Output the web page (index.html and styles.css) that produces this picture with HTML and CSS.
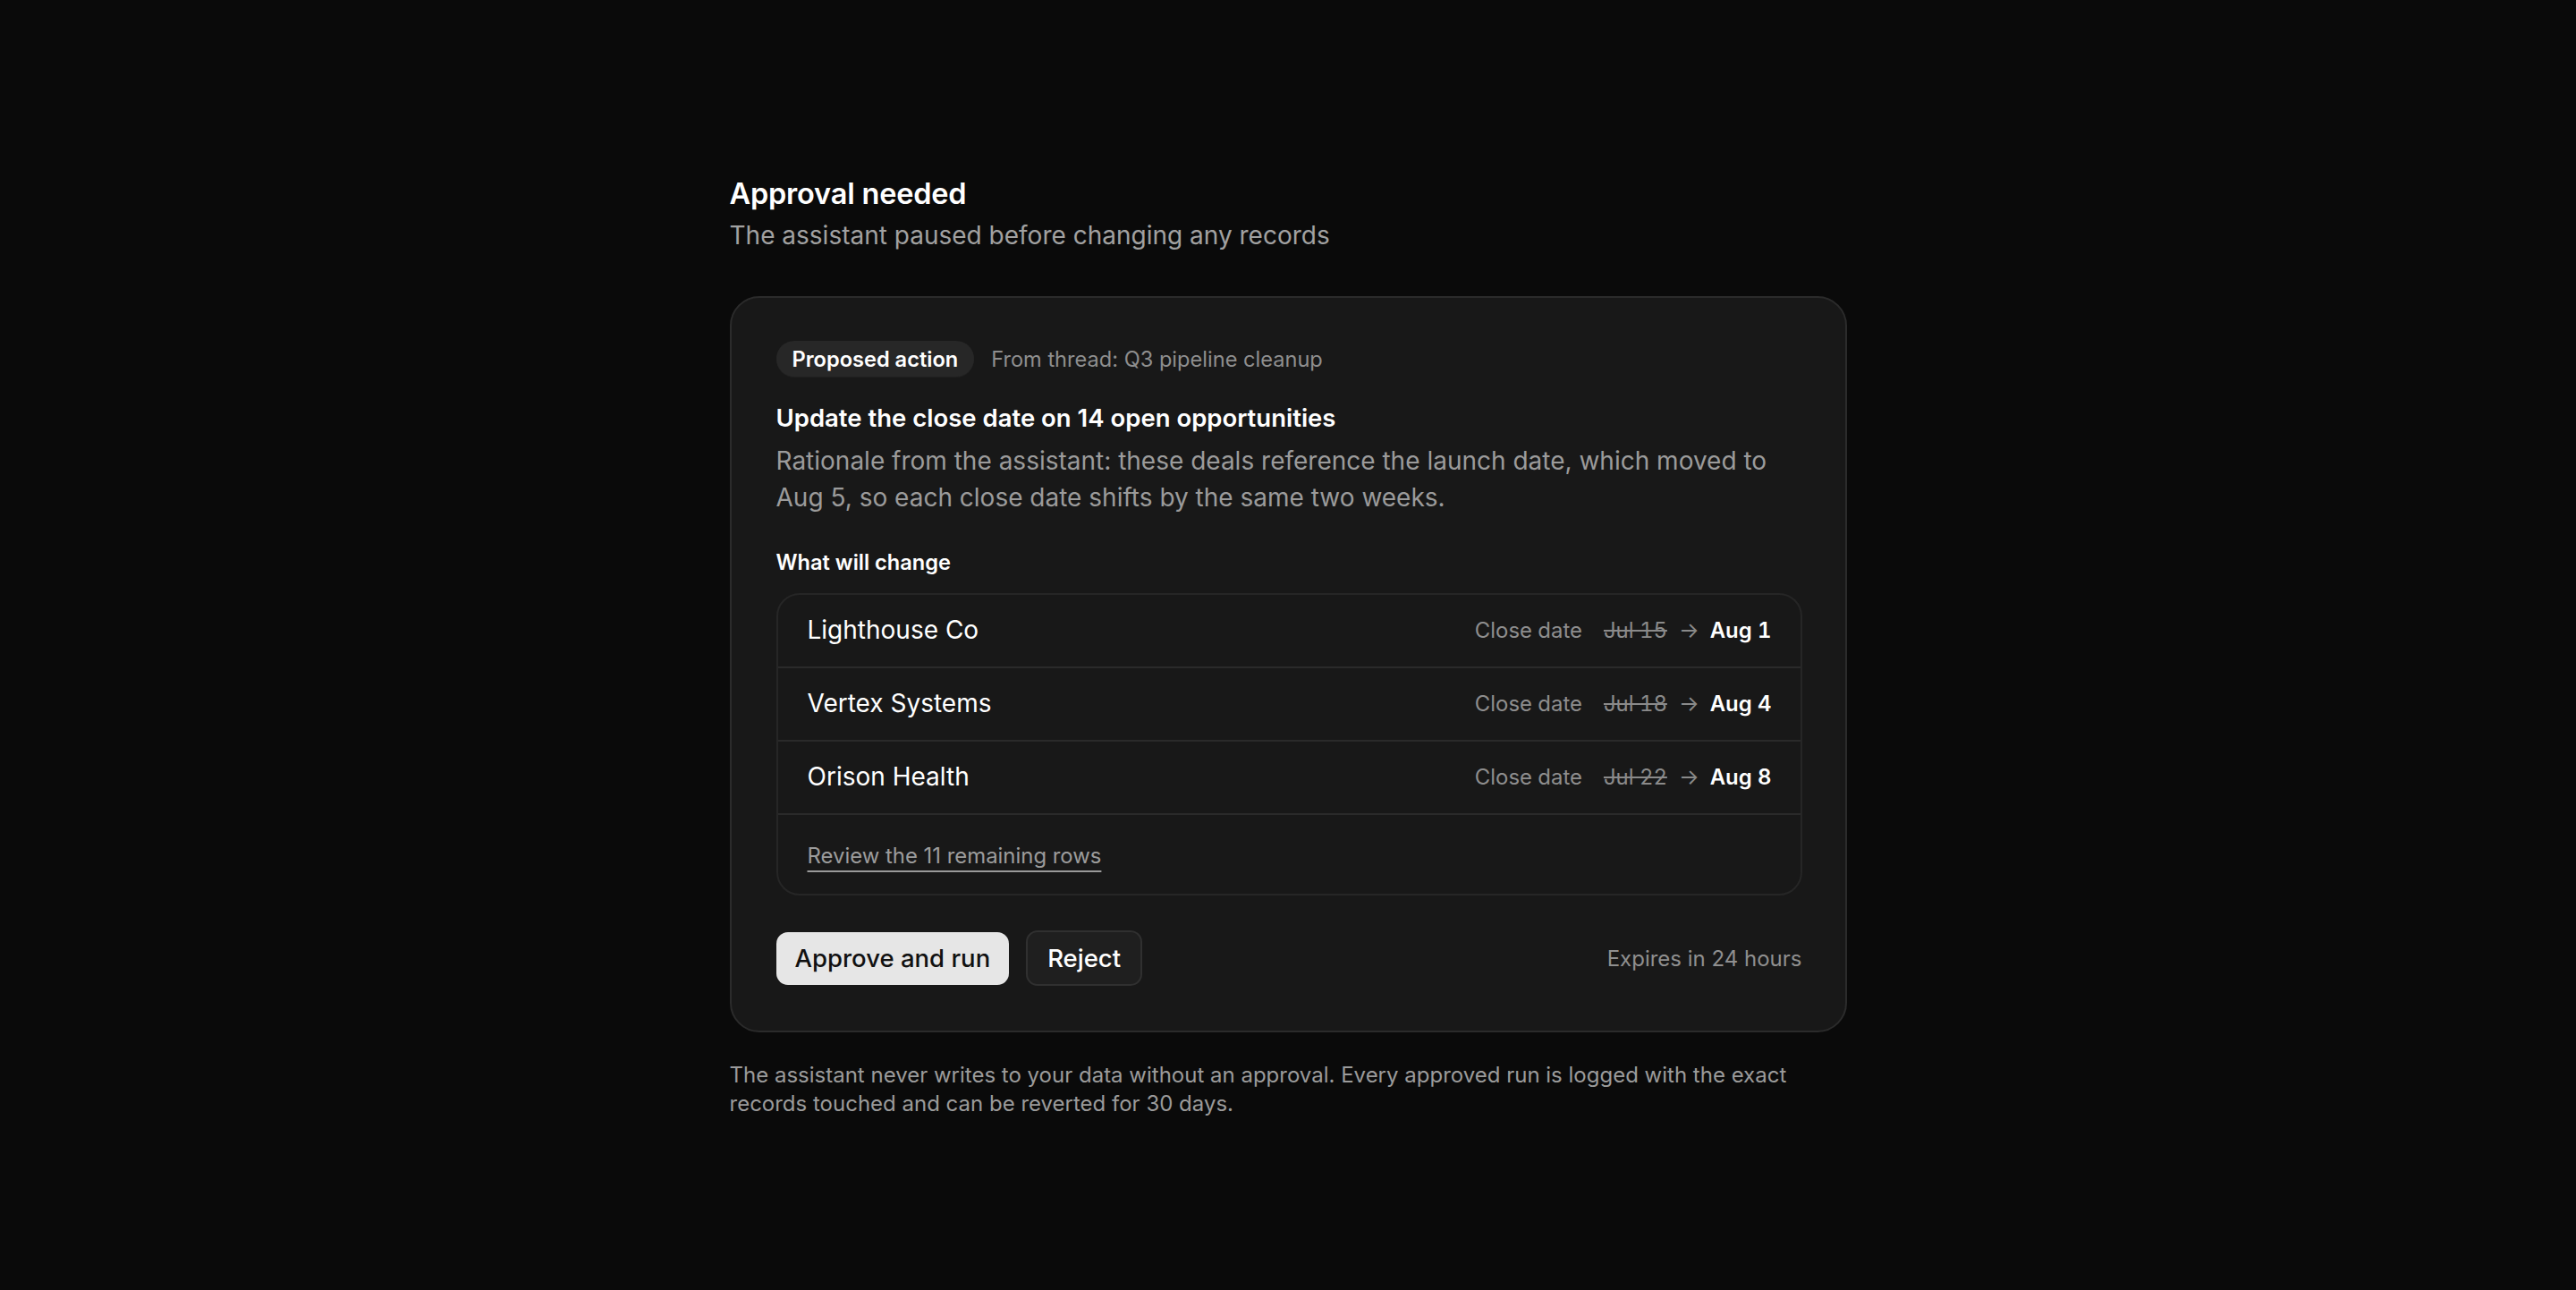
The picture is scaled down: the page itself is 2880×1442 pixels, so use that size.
FILE: index.html
```html
<!DOCTYPE html>
<html lang="en">
<head>
<meta charset="utf-8">
<title>Approval needed</title>
<link rel="stylesheet" href="styles.css">
</head>
<body>
<main class="page">
  <header class="intro">
    <h1 class="intro-title">Approval needed</h1>
    <p class="intro-sub">The assistant paused before changing any records</p>
  </header>

  <section class="card">
    <div class="meta">
      <span class="badge">Proposed action</span>
      <span class="thread">From thread: Q3 pipeline cleanup</span>
    </div>

    <h2 class="action-title">Update the close date on 14 open opportunities</h2>
    <p class="rationale">Rationale from the assistant: these deals reference the launch date, which moved to Aug 5, so each close date shifts by the same two weeks.</p>

    <h3 class="section-label">What will change</h3>
    <div class="changes">
      <div class="change-row">
        <span class="account">Lighthouse Co</span>
        <span class="diff">
          <span class="field">Close date</span>
          <span class="old">Jul 15</span>
          <span class="arrow">→</span>
          <span class="new">Aug 1</span>
        </span>
      </div>
      <div class="change-row">
        <span class="account">Vertex Systems</span>
        <span class="diff">
          <span class="field">Close date</span>
          <span class="old">Jul 18</span>
          <span class="arrow">→</span>
          <span class="new">Aug 4</span>
        </span>
      </div>
      <div class="change-row">
        <span class="account">Orison Health</span>
        <span class="diff">
          <span class="field">Close date</span>
          <span class="old">Jul 22</span>
          <span class="arrow">→</span>
          <span class="new">Aug 8</span>
        </span>
      </div>
      <div class="change-more">
        <a class="more-link" href="#">Review the 11 remaining rows</a>
      </div>
    </div>

    <div class="actions">
      <button class="btn btn-primary" type="button">Approve and run</button>
      <button class="btn btn-secondary" type="button">Reject</button>
      <span class="expires">Expires in 24 hours</span>
    </div>
  </section>

  <p class="footnote">The assistant never writes to your data without an approval. Every approved run is logged with the exact records touched and can be reverted for 30 days.</p>
</main>
</body>
</html>
```

FILE: styles.css
```css
* {
  box-sizing: border-box;
}

html, body {
  margin: 0;
  padding: 0;
  background: #0a0a0a;
}

body {
  font-family: Inter, "Noto Sans", "Liberation Sans", sans-serif;
  color: #f5f5f5;
  -webkit-font-smoothing: antialiased;
}

.page {
  width: 1249px;
  margin: 0 auto;
  padding-top: 197px;
  padding-bottom: 100px;
}

.intro-title {
  margin: 0;
  font-size: 32.5px;
  line-height: 40px;
  font-weight: 600;
  color: #ffffff;
  letter-spacing: -0.2px;
}

.intro-sub {
  margin: 8px 0 0;
  font-size: 28px;
  line-height: 36px;
  color: #a1a1a1;
}

.card {
  margin-top: 50px;
  background: #181818;
  border: 2px solid #2b2b2b;
  border-radius: 33px;
  padding: 48px 48px 50px 50px;
}

.meta {
  display: flex;
  align-items: center;
  gap: 19px;
}

.badge {
  display: inline-flex;
  align-items: center;
  height: 40px;
  padding: 0 18px;
  border-radius: 20px;
  background: #272727;
  color: #ffffff;
  font-size: 23.6px;
  font-weight: 600;
  box-shadow: 0 1px 0 rgba(255, 255, 255, 0.03);
}

.thread {
  font-size: 23.6px;
  color: #8e8e8e;
}

.action-title {
  margin: 28px 0 0;
  font-size: 27.5px;
  line-height: 36px;
  font-weight: 600;
  color: #ffffff;
}

.rationale {
  margin: 10px 0 0;
  font-size: 28px;
  line-height: 40.5px;
  color: #9b9b9b;
}

.section-label {
  margin: 37px 0 0;
  font-size: 23.6px;
  line-height: 32px;
  font-weight: 600;
  color: #ffffff;
}

.changes {
  margin-top: 18px;
  border: 2px solid #262626;
  border-radius: 26px;
  overflow: hidden;
}

.change-row {
  display: flex;
  align-items: center;
  justify-content: space-between;
  height: 82px;
  padding: 0 32px 2px 33px;
  border-bottom: 2px solid #2a2a2a;
}

.account {
  font-size: 28px;
  color: #ffffff;
}

.diff {
  display: flex;
  align-items: center;
  font-size: 23.9px;
  font-variant-numeric: tabular-nums;
}

.field {
  color: #8e8e8e;
  margin-right: 24px;
}

.old {
  color: #8a8a8a;
  text-decoration: line-through;
  text-decoration-thickness: 2px;
}

.arrow {
  color: #8a8a8a;
  margin: 0 12px 0 13px;
}

.new {
  color: #ffffff;
  font-weight: 600;
}

.change-more {
  padding: 30px 33px 24px;
  line-height: 32px;
}

.more-link {
  font-size: 23.9px;
  color: #9c9c9c;
  text-decoration: underline;
  text-decoration-color: #9a9a9a;
  text-decoration-thickness: 2px;
  text-underline-offset: 8px;
}

.actions {
  display: flex;
  align-items: center;
  gap: 19px;
  margin-top: 39px;
}

.btn {
  font-family: inherit;
  font-size: 27.5px;
  font-weight: 500;
  cursor: pointer;
  border-radius: 13px;
}

.btn-primary {
  height: 59px;
  padding: 0 21px;
  background: #e6e6e6;
  color: #111111;
  border: none;
}

.btn-secondary {
  height: 62px;
  padding: 0 22px;
  background: #1f1f1f;
  color: #ffffff;
  border: 2px solid #303030;
}

.expires {
  margin-left: auto;
  font-size: 24px;
  color: #8f8f8f;
}

.footnote {
  margin: 32px 0 0;
  font-size: 24px;
  line-height: 32px;
  color: #9b9b9b;
}
```
